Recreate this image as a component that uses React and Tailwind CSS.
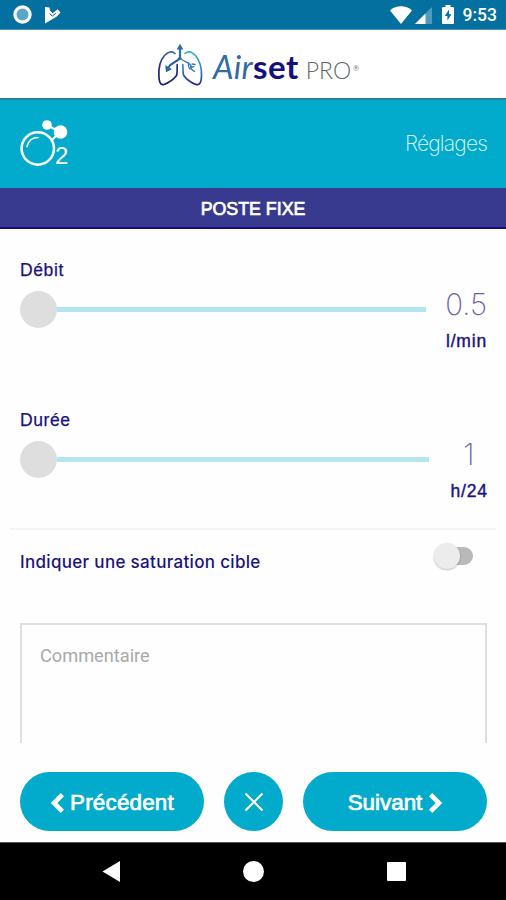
import { useState } from "react";

const StatusBar = () => {
    return (
        <div className="flex h-[30px] items-center bg-[#0370a0] border-b border-[#4a93b8] pl-[13px] pr-[9px] text-white">
            <svg width="19" height="19" viewBox="0 0 19 19">
                <circle cx="9.5" cy="9.5" r="7.6" fill="#5ba6c6" stroke="#fff" strokeWidth="3.2" />
            </svg>
            <svg className="ml-[12px]" width="17" height="18" viewBox="0 0 17 18">
                <path d="M1 1 L5.5 1.5 L6 4.5 L8.6 7.2 L13.6 3.2 L16.6 6.6 L12.5 10.8 L1 17.4 Z" fill="#fff" />
                <path d="M5.6 7.6 L8.4 10 L12 7.2" fill="none" stroke="#0370a0" strokeWidth="1" />
            </svg>
            <div className="ml-auto flex items-center">
                <svg width="22" height="18" viewBox="0 0 22 18" fill="#fff">
                    <path d="M11 18 L0 4.4 C6 -1 16 -1 22 4.4 Z" />
                </svg>
                <svg className="ml-[3px] mt-[1px]" width="17" height="17" viewBox="0 0 17 17">
                    <path d="M0 17 L17 0 V17 Z" fill="#4e9bbe" />
                    <path d="M0 17 L10.5 6.5 V17 Z" fill="#fff" />
                </svg>
                <svg className="ml-[10px]" width="12" height="19" viewBox="0 0 12 19">
                    <path d="M3.5 0 H8.5 V2 H11 Q12 2 12 3 V18 Q12 19 11 19 H1 Q0 19 0 18 V3 Q0 2 1 2 H3.5 Z" fill="#fff" />
                    <path d="M7 4.5 L2.8 11 H5.4 V15.5 L9.4 9.2 H7 Z" fill="#0370a0" />
                </svg>
                <span className="ml-[9px] font-['Roboto'] text-[17.5px] leading-none font-medium mt-[3px]">9:53</span>
            </div>
        </div>
    );
};

const LungsLogo = () => {
    return (
        <svg width="46" height="44" viewBox="0 0 46 44" fill="none" strokeLinecap="round" strokeLinejoin="round">
            <defs>
                <linearGradient id="left" x1="14" y1="8" x2="8" y2="42" gradientUnits="userSpaceOnUse">
                    <stop offset="0" stopColor="#2f6fae" />
                    <stop offset="0.5" stopColor="#232a80" />
                    <stop offset="1" stopColor="#1a1577" />
                </linearGradient>
                <linearGradient id="right" x1="36" y1="8" x2="32" y2="42" gradientUnits="userSpaceOnUse">
                    <stop offset="0" stopColor="#3db0d3" />
                    <stop offset="0.55" stopColor="#3a7fbd" />
                    <stop offset="1" stopColor="#201a7c" />
                </linearGradient>
            </defs>
            <path d="M18 10.5 C15 7.5 11 9 7.5 12.5 C2.5 18 1.5 25 1.9 33 C2 39 3.5 42.5 7 41.5 C11 40 16.5 36.5 19.5 32.5 C20.5 30 20 25 20.2 21.5" stroke="url(#left)" strokeWidth="1.7" />
            <path d="M28 10.5 C31 7.5 35 9 38.5 12.5 C43 18 44.8 25 44.5 33 C44.4 39 43 42.5 39 41.5 C35 40 29.5 36.5 26.8 32.5 C25.6 30 26.2 25 25.8 21.5" stroke="url(#right)" strokeWidth="1.7" />
            <path d="M23 5 V16" stroke="#2d6fad" strokeWidth="2.2" />
            <path d="M23 0.8 L19.6 6.4 H26.4 Z" fill="#2d6fad" />
            <path d="M22.5 15 C20.5 19.5 14.5 18.5 11 25" stroke="#2a5ea3" strokeWidth="2" />
            <path d="M8.3 22 L9 29.2 L15 26.2 Z" fill="#2a66a8" />
            <path d="M23.5 15 C26 19.5 30.5 17.5 33.5 22 C34 24 35.5 24.5 37 23.5 M33.5 22.5 C33.5 25 35 27.5 37.5 28.3 M31.5 20 C31 22.5 31.5 24 32.8 26 M35 21 L38 21.5" stroke="#2f78b5" strokeWidth="1.3" />
        </svg>
    );
};

const Header = () => {
    return (
        <div className="flex h-[70px] items-start border-b-2 border-[#2b8099] bg-white pl-[157px] pt-[13px] font-['Lato']">
            <LungsLogo />
            <div className="ml-[10px] mt-[4px] flex items-baseline leading-[38px]">
                <span className="text-[32.5px] italic tracking-[0.3px] text-[#2f6aab]">Air</span>
                <span className="text-[33px] font-bold tracking-[0.5px] text-[#17107b]">set</span>
                <span className="ml-[7px] text-[23px] font-light tracking-[0px] text-[#666]">PRO</span>
                <span className="-translate-y-[8px] ml-[2px] text-[7px] leading-none text-[#777]">®</span>
            </div>
        </div>
    );
};

const OxygenIcon = () => {
    return (
        <svg width="50" height="48" viewBox="0 0 50 48">
            <circle cx="17.8" cy="28.5" r="16.2" fill="none" stroke="#fff" strokeWidth="2.5" />
            <path d="M7 26.5 C8.5 20.5 13 17.5 18 17.5" fill="none" stroke="#fff" strokeWidth="1.7" strokeLinecap="round" />
            <path d="M27 5 L40 12 L31 21" fill="none" stroke="#fff" strokeWidth="2" />
            <circle cx="27" cy="5" r="4.8" fill="#fff" />
            <circle cx="40.5" cy="12" r="6.8" fill="#fff" />
            <text x="35" y="44" fill="#fff" fontSize="24" fontFamily="Liberation Sans, sans-serif">2</text>
        </svg>
    );
};

const SliderRow = ({ label, value, unit, trackClass }) => {
    return (
        <div className="h-[150px] pl-5 pr-[19px] font-['Liberation_Sans']">
            <div className="text-[17.5px] leading-6 tracking-[0.6px] text-[#1b1281] [-webkit-text-stroke:0.25px_#1b1281]">{label}</div>
            <div className="flex">
                <div className="mt-[9px] flex h-[37px] items-center">
                    <div className="size-[37px] rounded-full bg-[#dedede]" />
                    <div className={trackClass} />
                </div>
                <div className="ml-auto flex flex-col items-center">
                    <span className="mt-[5px] font-['Inter'] text-[29.5px] leading-[34px] font-extralight text-[#6a64aa]">{value}</span>
                    <span className="mt-[8px] -mr-[0.8px] text-[17.5px] leading-6 tracking-[0.8px] text-[#1b1281] [-webkit-text-stroke:0.4px_#1b1281]">{unit}</span>
                </div>
            </div>
        </div>
    );
};

const Chevron = ({ d }) => {
    return (
        <svg width="14" height="20" viewBox="0 0 14 20" fill="none">
            <path d={d} stroke="#fff" strokeWidth="4.6" />
        </svg>
    );
};

const App = () => {
    const [comment, setComment] = useState("");

    return (
        <div className="flex h-[900px] w-[506px] flex-col overflow-hidden bg-[#fefefe] font-['Inter',sans-serif]">
            <StatusBar />
            <Header />

            <div className="flex h-[88px] items-center justify-between bg-[#02abcb] pl-5 pr-[19px]">
                <OxygenIcon />
                <span className="text-[21px] font-extralight tracking-[-0.8px] text-[#e2f7fb]">Réglages</span>
            </div>
            <div className="flex h-[41px] items-center justify-center border-b-2 border-[#15107c] bg-[#373a8f] pt-[3px] font-['Liberation_Sans'] text-[17.8px] text-white [-webkit-text-stroke:0.7px_#fff]">
                POSTE FIXE
            </div>

            {/* Sliders */}
            <div className="h-[299px] pt-[29px]">
                <SliderRow label="Débit" value="0.5" unit="l/min" trackClass="h-[5px] w-[369px] bg-[#b3e6ee]" />
                <SliderRow label="Durée" value="1" unit="h/24" trackClass="h-[5px] w-[372px] bg-[#b3e6ee]" />
            </div>

            {/* Target saturation */}
            <div className="mx-[10px] flex h-[95px] items-start justify-between border-t-2 border-[#f4f4f4] pl-[10px] pr-[23px]">
                <span className="mt-[20px] text-[17px] leading-6 font-medium tracking-[0.32px] text-[#1b1281]">Indiquer une saturation cible</span>
                <div className="mt-[12px] flex h-[27px] w-[39px] items-center">
                    <div className="relative size-[26px] shrink-0 rounded-full bg-[#ececec] shadow-[0_1px_2px_rgba(0,0,0,0.25)]" />
                    <div className="-ml-[8px] h-[18px] w-[21px] rounded-r-full bg-[#b9b9b9]" />
                </div>
            </div>

            <textarea
                className="ml-5 mr-[19px] block h-[120px] resize-none border-2 border-b-0 border-[#dfdfdf] px-[18px] pt-[19px] font-['Roboto'] text-[18.2px] leading-6 outline-none placeholder:text-[#a9a9a9]"
                placeholder="Commentaire"
                value={comment}
                onChange={(e) => setComment(e.target.value)}
            />

            {/* Actions */}
            <div className="flex h-[99px] items-start justify-between pl-5 pr-[19px] pt-[29px] font-['Liberation_Sans'] text-[22.4px] text-white">
                <button className="flex h-[59px] w-[184px] items-center justify-center gap-[6px] rounded-full bg-[#02abcb] pt-[2px] [-webkit-text-stroke:0.7px_#fff]">
                    <Chevron d="M12.4 1.6 L4 10 L12.4 18.4" />
                    <span className="tracking-[0.2px]">Précédent</span>
                </button>
                <button className="flex size-[59px] items-center justify-center rounded-full bg-[#02abcb]">
                    <svg width="20" height="20" viewBox="0 0 20 20">
                        <path d="M1.5 1.5 L18.5 18.5 M18.5 1.5 L1.5 18.5" stroke="#fff" strokeWidth="2" />
                    </svg>
                </button>
                <button className="flex h-[59px] w-[184px] items-center justify-center gap-[7px] rounded-full bg-[#02abcb] pt-[2px] pl-[1px] [-webkit-text-stroke:0.7px_#fff]">
                    <span>Suivant</span>
                    <Chevron d="M1.6 1.6 L10 10 L1.6 18.4" />
                </button>
            </div>

            <div className="flex h-[58px] items-center border-t border-[#555] bg-black pl-[102px]">
                <svg width="18" height="21" viewBox="0 0 18 21">
                    <path d="M0.5 10.5 L18 0 V21 Z" fill="#fff" />
                </svg>
                <div className="ml-[123px] size-[21px] rounded-full bg-white" />
                <div className="ml-[123px] size-[19px] rounded-[1px] bg-white" />
            </div>
        </div>
    );
};

export default App;
